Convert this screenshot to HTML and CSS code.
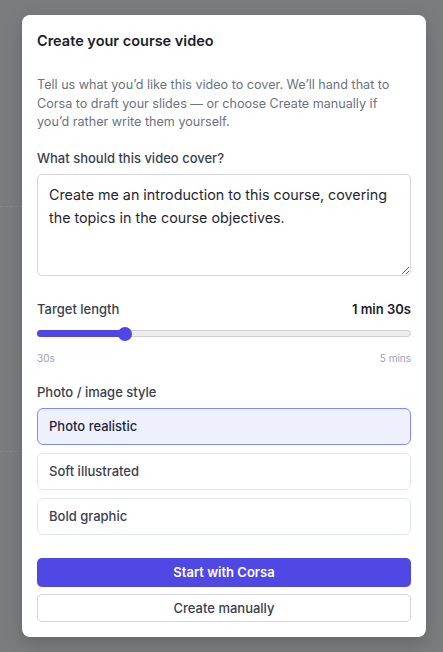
FILE: index.html
```html
<!DOCTYPE html>
<html lang="en">
<head>
    <meta charset="UTF-8">
    <meta name="viewport" content="width=device-width, initial-scale=1.0">
    <title>Create your course video</title>
    <link rel="stylesheet" href="styles.css">
</head>
<body>
    <!-- faint page content behind the overlay -->
    <div class="backdrop-card"></div>
    <div class="overlay">
        <div class="modal">
            <h1 class="modal-title">Create your course video</h1>
            <p class="modal-desc">Tell us what you’d like this video to cover. We’ll hand that to Corsa to draft your slides — or choose Create manually if you’d rather write them yourself.</p>

            <div class="field field-topic">
                <label for="topic" class="field-label">What should this video cover?</label>
                <textarea id="topic" class="topic-input">Create me an introduction to this course, covering the topics in the course objectives.</textarea>
            </div>

            <div class="field field-length">
                <div class="length-head">
                    <span class="field-label">Target length</span>
                    <span class="length-value">1 min 30s</span>
                </div>
                <div class="slider">
                    <div class="slider-fill"></div>
                    <div class="slider-thumb"></div>
                </div>
                <div class="slider-scale">
                    <span>30s</span>
                    <span>5 mins</span>
                </div>
            </div>

            <div class="field field-style">
                <span class="field-label">Photo / image style</span>
                <div class="style-list">
                    <button class="style-option selected">Photo realistic</button>
                    <button class="style-option">Soft illustrated</button>
                    <button class="style-option">Bold graphic</button>
                </div>
            </div>

            <div class="actions">
                <button class="btn-primary">Start with Corsa</button>
                <button class="btn-secondary">Create manually</button>
            </div>
        </div>
    </div>
</body>
</html>
```
FILE: styles.css
```css
* {
    box-sizing: border-box;
    margin: 0;
    padding: 0;
}

body {
    font-family: 'Inter', 'Noto Sans', sans-serif;
    background-color: #7b7c7f;
    width: 443px;
    height: 652px;
    overflow: hidden;
}

.backdrop-card {
    position: absolute;
    left: -30px;
    top: 206px;
    width: 60px;
    height: 246px;
    border: 1px dashed #86878a;
    border-radius: 10px;
}

.overlay {
    position: relative;
    padding: 15px 17px 16px 22px;
}

.modal {
    background-color: #fff;
    border-radius: 8px;
    padding: 16px 15px 15px;
    box-shadow: 0 6px 18px rgba(0, 0, 0, 0.18);
}

.modal-title {
    font-size: 14.5px;
    font-weight: 600;
    color: #1a1e2c;
    line-height: 20px;
}

.modal-desc {
    margin-top: 25px;
    font-size: 12.6px;
    line-height: 18.5px;
    color: #6b7280;
}

.field-label {
    display: block;
    font-size: 13px;
    font-weight: 500;
    color: #394150;
    line-height: 18px;
}

.field-topic {
    margin-top: 17px;
}

.topic-input {
    display: block;
    width: 100%;
    height: 102px;
    margin-top: 7px;
    padding: 8px 11px;
    font-family: inherit;
    font-size: 14.3px;
    line-height: 23px;
    color: #1f2633;
    border: 1px solid #d4d7dd;
    border-radius: 5px;
    resize: vertical;
    background: #fff;
}

.field-length {
    margin-top: 24px;
}

.length-head {
    display: flex;
    justify-content: space-between;
    align-items: center;
}

.length-value {
    font-size: 13px;
    font-weight: 600;
    color: #1a1e2c;
}

.slider {
    position: relative;
    height: 7px;
    margin-top: 12px;
    background-color: #ececec;
    border: 1px solid #cfcfcf;
    border-radius: 4px;
}

.slider-fill {
    width: 87px;
    height: 7px;
    margin: -1px 0 0 -1px;
    background-color: #4f46e5;
    border-radius: 4px;
}

.slider-thumb {
    position: absolute;
    left: 80px;
    top: -4px;
    width: 14px;
    height: 14px;
    border-radius: 50%;
    background-color: #4f46e5;
}

.slider-scale {
    display: flex;
    justify-content: space-between;
    margin-top: 15px;
    font-size: 10px;
    color: #98a2b6;
}

.field-style {
    margin-top: 19px;
}

.style-list {
    display: flex;
    flex-direction: column;
    gap: 8px;
    margin-top: 7px;
}

.style-option {
    height: 37px;
    padding: 0 11px;
    text-align: left;
    font-family: inherit;
    font-size: 13px;
    font-weight: 500;
    color: #394150;
    background-color: #fff;
    border: 1px solid #e2e6ef;
    border-radius: 6px;
}

.style-option.selected {
    background-color: #eef1fd;
    border: 1.5px solid #7f8cf5;
    color: #22263d;
}

.actions {
    display: flex;
    flex-direction: column;
    gap: 7px;
    margin-top: 23px;
}

.btn-primary {
    height: 29px;
    font-family: inherit;
    font-size: 13px;
    font-weight: 600;
    color: #fff;
    background-color: #5048e5;
    border: none;
    border-radius: 5px;
}

.btn-secondary {
    height: 28px;
    font-family: inherit;
    font-size: 13px;
    font-weight: 500;
    color: #394150;
    background-color: #fff;
    border: 1px solid #d4d7dd;
    border-radius: 5px;
}
```
